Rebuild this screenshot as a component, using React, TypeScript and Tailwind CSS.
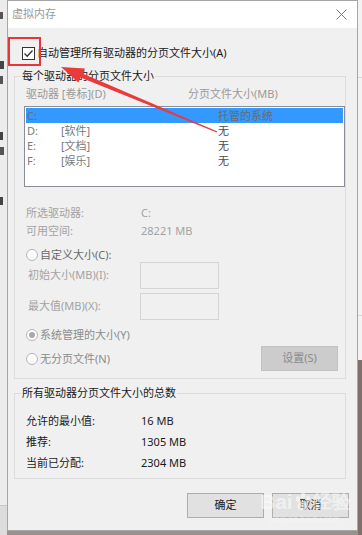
import React from 'react';

const font = "font-['Noto_Sans','Noto_Sans_CJK_SC',sans-serif]";

const drives = [
  { letter: 'C:', label: '', size: '托管的系统', selected: true },
  { letter: 'D:', label: '[软件]', size: '无', selected: false },
  { letter: 'E:', label: '[文档]', size: '无', selected: false },
  { letter: 'F:', label: '[娱乐]', size: '无', selected: false },
];

const Radio = ({ checked, label, dark }: { checked?: boolean; label: string; dark?: boolean }) => (
  <div className="flex h-[16px] items-center pl-[11px]">
    <span className="flex h-[12px] w-[12px] items-center justify-center rounded-full border border-[#b4b4b4] bg-white">
      {checked && <span className="h-[6px] w-[6px] rounded-full bg-[#a8a8a8]" />}
    </span>
    <span className={`ml-[2px] leading-[16px] ${dark ? 'text-[#6a6a6a]' : 'text-[#8c8c8c]'}`}>{label}</span>
  </div>
);

const App: React.FC = () => {
  return (
    <div className={`relative flex h-[535px] w-[362px] overflow-hidden bg-[#9a918c] text-[11px] ${font}`}>
      {/* background window, left - only text fragments peek out */}
      <div className="flex h-[535px] w-[7px] flex-col bg-[#ececec]">
        <span className="mt-[12px] h-[7px] w-[3px] bg-[#555]" />
        <span className="mt-[42px] h-[8px] w-[4px] bg-[#444]" />
        <span className="mt-[7px] h-[8px] w-[3px] bg-[#555]" />
        <span className="mt-[48px] h-[8px] w-[3px] bg-[#444]" />
        <span className="mt-[7px] h-[8px] w-[4px] bg-[#555]" />
        <span className="mt-[42px] h-[8px] w-[3px] bg-[#444]" />
        <div className="mt-auto h-[30px] border-t border-[#c8c8c8] bg-[#dcdcdc]" />
      </div>

      {/* dialog */}
      <div className="flex h-[531px] w-[351px] flex-col border border-[#a6a6a6] bg-[#f0f0f0]">
        <div className="flex h-[27px] items-center justify-between bg-white pl-[4px] pr-[10px]">
          <span className="text-[11px] text-[#9a9a9a]">虚拟内存</span>
          <svg width="11" height="11" viewBox="0 0 11 11">
            <path d="M0.5 0.5 L10.5 10.5 M10.5 0.5 L0.5 10.5" stroke="#7a7a7a" strokeWidth="1" fill="none" />
          </svg>
        </div>

        <div className="flex flex-1 flex-col px-[6px] pr-[8px]">
          {/* auto manage */}
          <div className="mt-[17px] flex h-[16px] items-center pl-[8px]">
            <span className="flex h-[13px] w-[13px] items-center justify-center border border-[#333] bg-white">
              <svg width="11" height="11" viewBox="0 0 11 11">
                <path d="M1.5 5.5 L4.2 8.2 L9.5 2.5" stroke="#333" strokeWidth="1.3" fill="none" />
              </svg>
            </span>
            <span className="ml-[2px] leading-[16px] text-[#1a1a1a]">自动管理所有驱动器的分页文件大小(A)</span>
          </div>

          {/* per drive */}
          <fieldset className="mt-[7px] w-[332px] border border-[#dcdcdc] pb-[7px]">
            <legend className="ml-[6px] px-[1px] leading-[16px] text-[#1a1a1a]">每个驱动器的分页文件大小</legend>
            <div className="mt-[2px] flex h-[16px] items-center pl-[11px] text-[#9a9a9a]">
              <span className="w-[162px]">驱动器 [卷标](D)</span>
              <span>分页文件大小(MB)</span>
            </div>
            <div className="ml-[9px] mt-[4px] h-[81px] border border-[#8a8d95] bg-white pt-[1px]">
              {drives.map((d) => (
                <div
                  key={d.letter}
                  className={`mx-[1px] flex h-[15px] items-center pl-[1px] leading-[15px] ${
                    d.selected ? 'bg-[#3399ff] text-[#6b6b6b]' : 'text-[#7a7a7a]'
                  }`}
                >
                  <span className="w-[34px]">{d.letter}</span>
                  <span className="w-[157px]">{d.label}</span>
                  <span className={d.selected ? '' : 'text-[#4a4a4a]'}>{d.size}</span>
                </div>
              ))}
            </div>

            <div className="mt-[17px] flex pl-[11px] leading-[18px] text-[#a3a3a3]">
              <span className="w-[115px]">所选驱动器:</span>
              <span>C:</span>
            </div>
            <div className="flex pl-[11px] leading-[18px] text-[#a3a3a3]">
              <span className="w-[115px]">可用空间:</span>
              <span>28221 MB</span>
            </div>

            <div className="mt-[7px]">
              <Radio label="自定义大小(C):" dark />
            </div>
            <div className="-mt-[1px] flex items-center pl-[13px] text-[#a3a3a3]">
              <span className="w-[112px]">初始大小(MB)(I):</span>
              <span className="h-[27px] w-[79px] border border-[#d4d4d4] bg-[#f0f0f0]" />
            </div>
            <div className="mt-[4px] flex items-center pl-[13px] text-[#a3a3a3]">
              <span className="w-[112px]">最大值(MB)(X):</span>
              <span className="h-[27px] w-[79px] border border-[#d4d4d4] bg-[#f0f0f0]" />
            </div>
            <div className="mt-[7px]">
              <Radio checked label="系统管理的大小(Y)" />
            </div>
            <div className="mt-[3px] flex h-[25px] items-center justify-between pr-[7px]">
              <Radio label="无分页文件(N)" />
              <span className="flex h-[25px] w-[77px] items-center justify-center border border-[#c2c2c2] bg-[#cccccc] text-[#8a8a8a]">
                设置(S)
              </span>
            </div>
          </fieldset>

          {/* totals */}
          <fieldset className="mt-[6px] w-[332px] border border-[#dcdcdc] pb-[5px]">
            <legend className="ml-[6px] px-[1px] leading-[16px] text-[#1a1a1a]">所有驱动器分页文件大小的总数</legend>
            <div className="mt-[9px] flex flex-col pl-[11px] leading-[21px] text-[#1a1a1a]">
              <div className="flex">
                <span className="w-[115px]">允许的最小值:</span>
                <span>16 MB</span>
              </div>
              <div className="flex">
                <span className="w-[115px]">推荐:</span>
                <span>1305 MB</span>
              </div>
              <div className="flex">
                <span className="w-[115px]">当前已分配:</span>
                <span>2304 MB</span>
              </div>
            </div>
          </fieldset>

          <div className="mt-[14px] flex justify-end gap-[8px]">
            <button className="flex h-[25px] w-[77px] items-center justify-center border border-[#adadad] bg-[#e1e1e1] text-[#1a1a1a]">
              确定
            </button>
            <button className="flex h-[25px] w-[77px] items-center justify-center border border-[#adadad] bg-[#e1e1e1] text-[#1a1a1a]">
              取消
            </button>
          </div>
        </div>
      </div>

      {/* background window, right */}
      <div className="flex w-[4px] flex-col">
        <div className="h-[78px] border-b border-[#d6d6d6] bg-[#f3f3f3]" />
        <div className="h-[238px] border-b border-[#d6d6d6] bg-[#f3f3f3]" />
        <div className="h-[44px] bg-[#f3f3f3]" />
        <div className="flex-1 bg-[#7f716a]" />
      </div>

      {/* annotation: red box + arrow */}
      <div className="absolute left-[8px] top-[37px] h-[29px] w-[33px] border-2 border-[#e8343a]" />
      <svg className="absolute left-0 top-0" width="362" height="535" viewBox="0 0 362 535">
        <polygon
          points="61,67 85,68.5 82.6,73.4 217.4,131.4 216.8,132.6 80.6,77.6 78.4,82.5"
          fill="#ea3b3b"
        />
      </svg>

      {/* watermark */}
      <div className="pointer-events-none absolute left-[260px] top-[490px] flex flex-col items-center text-white/50">
        <div className="flex items-center font-['Liberation_Sans',sans-serif] text-[21px] font-bold leading-[24px]">
          <span>Bai</span>
          <svg width="18" height="20" viewBox="0 0 18 20" className="mx-[1px]">
            <g fill="rgba(255,255,255,0.55)">
              <ellipse cx="4" cy="7" rx="2.2" ry="3" />
              <ellipse cx="9" cy="3.5" rx="2.2" ry="3" />
              <ellipse cx="14" cy="7" rx="2.2" ry="3" />
              <path d="M9 9 C4 9 2 15 4.5 17 C6.5 18.5 11.5 18.5 13.5 17 C16 15 14 9 9 9 Z" />
            </g>
          </svg>
          <span className="text-[19px]">经验</span>
        </div>
        <span className="text-[8px] leading-[10px] text-white/40">jingyan.baidu.com</span>
      </div>
    </div>
  );
};

export default App;
